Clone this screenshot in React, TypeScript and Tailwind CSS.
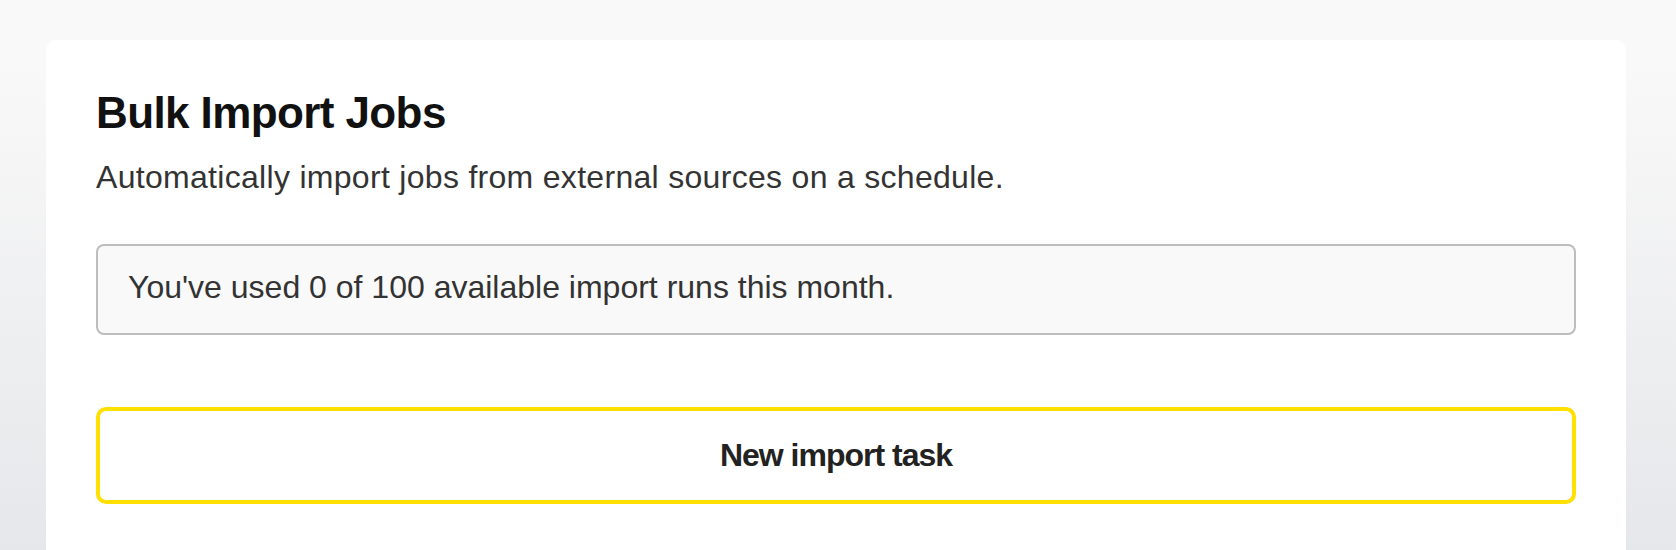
const ImportJobsCard = () => {
  const used = 0
  const limit = 100

  return (
    <div className="ml-[46px] mt-[40px] w-[1580px] min-h-[600px] rounded-[10px] bg-white px-[50px] pt-[47px]">
      <h1 className="text-[44px] font-bold leading-[1.2] tracking-[-0.6px] text-[#111111]">
        Bulk Import Jobs
      </h1>
      <p className="mt-[13px] text-[32px] leading-[48px] tracking-[0.3px] text-[#333333]">
        Automatically import jobs from external sources on a schedule.
      </p>

      <div className="mt-[43px] rounded-[8px] border-2 border-[#bdbdbd] bg-[#f9f9f9] px-[30px] pt-[17px] pb-[21px]">
        <p className="text-[32px] leading-[49px] text-[#333333]">
          You've used {used} of {limit} available import runs this month.
        </p>
      </div>

      <button
        type="button"
        className="mt-[72px] flex h-[97px] w-full items-center justify-center rounded-[10px] border-4 border-[#ffe000] bg-white text-[32px] font-bold leading-[48px] tracking-[-1px] text-[#222222]"
      >
        New import task
      </button>
    </div>
  )
}

export default function App() {
  return (
    <div className="h-[550px] w-full overflow-hidden bg-gradient-to-b from-[#f9f9f9] from-10% to-[#e6e7ea] font-['Liberation_Sans',Arial,sans-serif]">
      <ImportJobsCard />
    </div>
  )
}
